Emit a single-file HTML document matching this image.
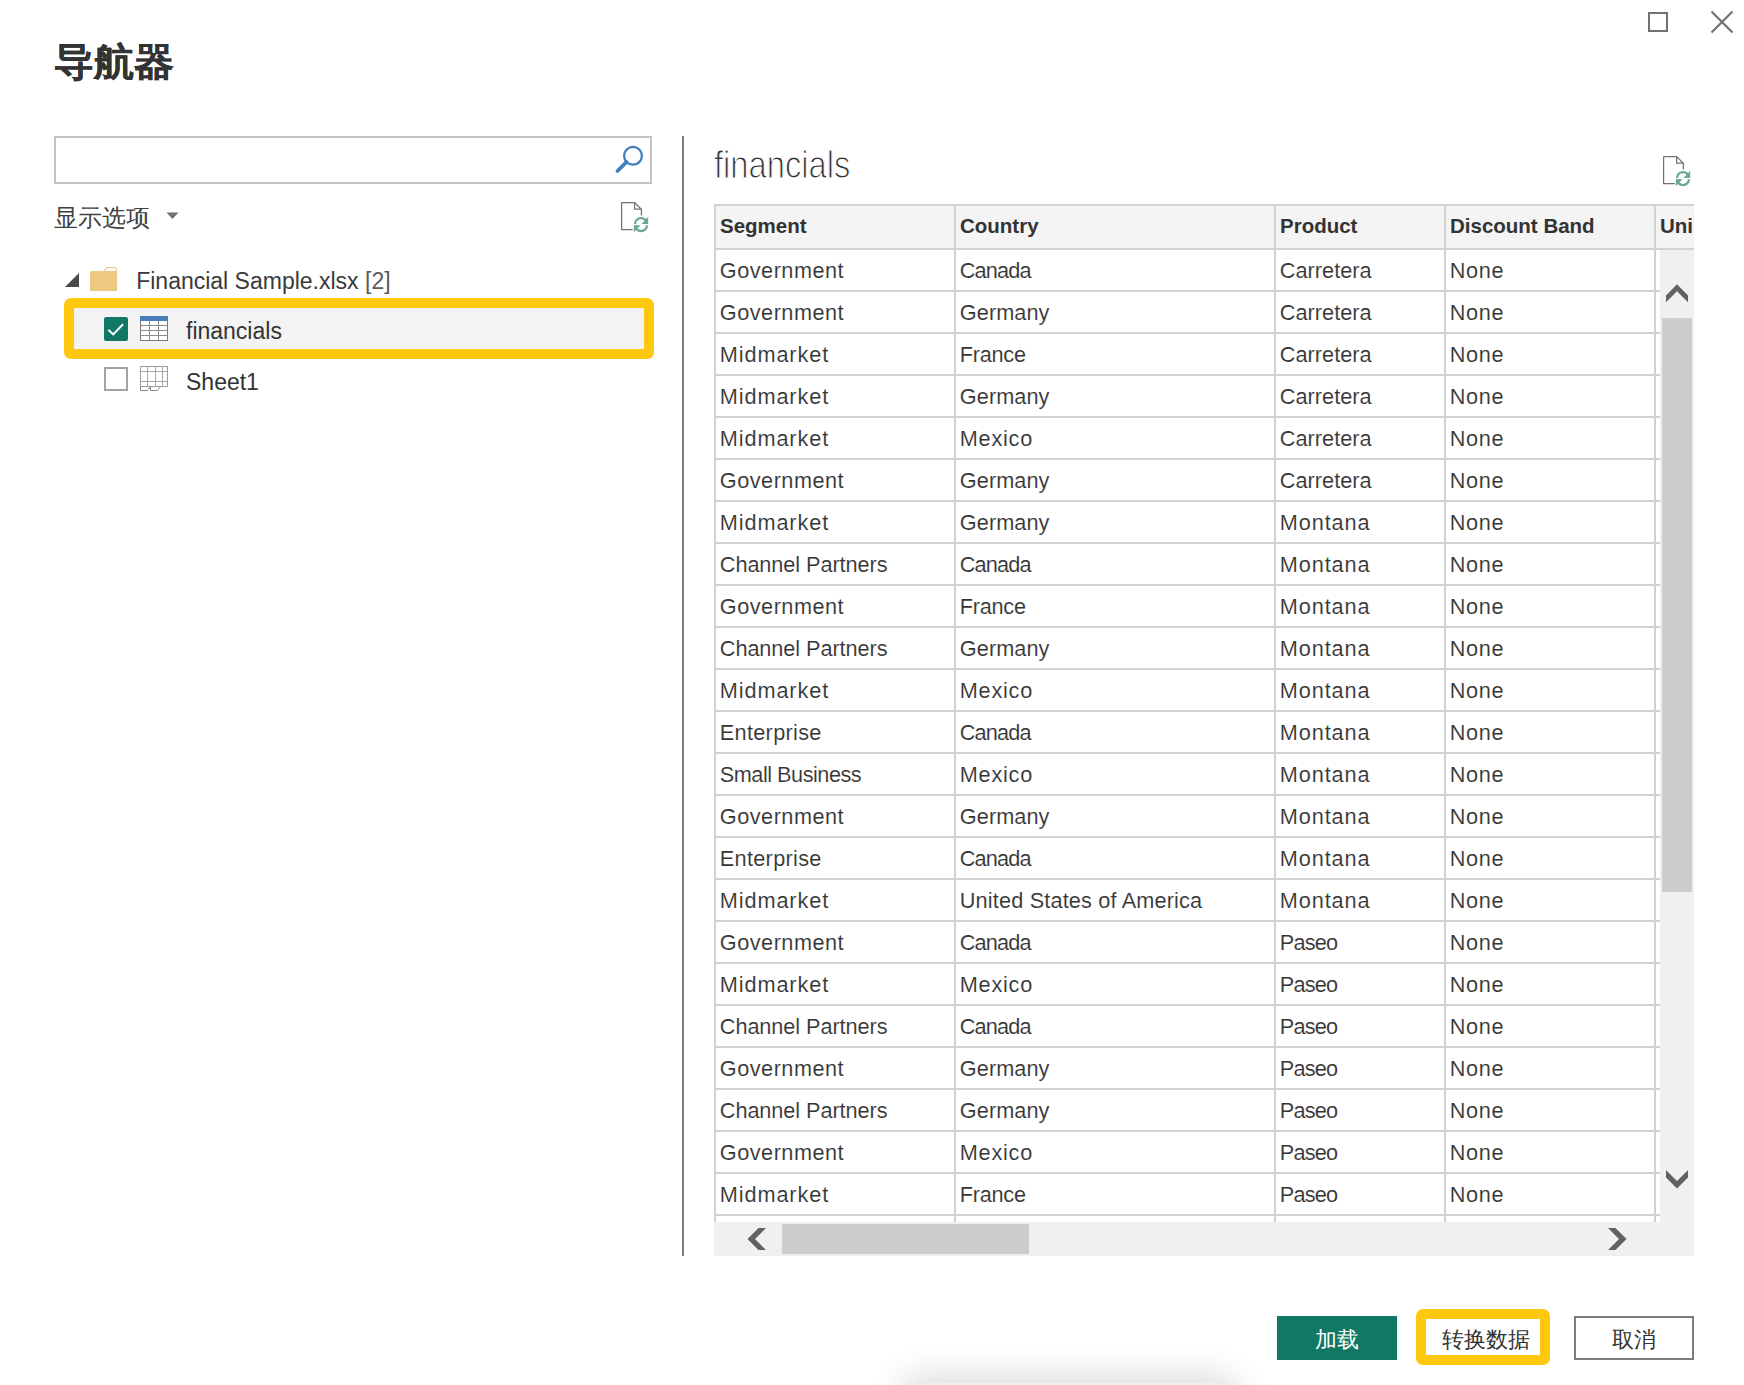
<!DOCTYPE html>
<html><head><meta charset="utf-8">
<style>
html,body{margin:0;padding:0;background:#fff;width:1744px;height:1385px;overflow:hidden;position:relative;font-family:"Liberation Sans",sans-serif;color:#333}
div,span,svg{position:absolute;box-sizing:border-box}
.ln{background:#d2d2d2}
.hdr{background:#f4f4f4}
.th{font-weight:bold;font-size:20.5px;line-height:24px;white-space:nowrap;color:#333}
.td{font-size:21.7px;line-height:24px;white-space:nowrap;color:#333;-webkit-text-stroke:0.12px #fff}
.clip{left:0;top:0;width:1694px;height:1222px;overflow:hidden}
.t{white-space:nowrap;line-height:1}
</style></head><body>
<!-- title -->
<div class="t" id="title" style="left:54px;top:42.7px;font-size:40px;font-weight:bold;color:#333;-webkit-text-stroke:0.35px #333;transform:scaleY(0.95);transform-origin:0 0">导航器</div>
<!-- window controls -->
<svg style="left:0;top:0" width="1744" height="60">
<rect x="1649" y="13" width="18" height="18" fill="none" stroke="#717171" stroke-width="2"/>
<path d="M1711.5 11.5L1732.5 32.5M1732.5 11.5L1711.5 32.5" stroke="#717171" stroke-width="2.2" fill="none"/>
</svg>
<!-- search -->
<div style="left:54px;top:136px;width:598px;height:48px;border:2px solid #c4c4c4"></div>
<svg style="left:0;top:0" width="700" height="400">
<circle cx="633" cy="155.8" r="8.9" fill="none" stroke="#3f7cc0" stroke-width="2.3"/>
<path d="M617.5 171L626.5 162" stroke="#3f7cc0" stroke-width="3.8" stroke-linecap="round"/>
<!-- show options triangle -->
<path d="M166.5 212.5H178.5L172.5 219Z" fill="#707070"/>
<!-- tree triangle -->
<path d="M65 287H79V273Z" fill="#4b4b4b"/>
<!-- folder -->
<path d="M90 273Q90 271 92 271H117V291H90Z" fill="#edc880"/>
<path d="M103.6 271L107.4 267.5H115Q116.5 267.5 116.5 269V271" fill="none" stroke="#edc77f" stroke-width="1.2"/>
<!-- checkbox unchecked -->
<rect x="105" y="368" width="22" height="22" fill="#fff" stroke="#a3a3a3" stroke-width="2"/>
<!-- sheet icon -->
<path d="M140.5 366.5H167.5V386.5H140.5Z" fill="#fff" stroke="#9a9a9a" stroke-width="1"/>
<path d="M140.5 371.5H167.5M140.5 381.5H167.5M147.5 366.5V386.5M155.5 366.5V386.5M162.5 366.5V386.5" stroke="#a8a8a8" stroke-width="1"/>
<path d="M140.5 386.5V390.5H147.5L150.5 386.5M150.5 386.5V390.5H157.5L160.5 386.5" fill="none" stroke="#8a8a8a" stroke-width="1"/>
</svg>
<!-- show options text -->
<div class="t" id="opts" style="left:54px;top:206px;font-size:24px;color:#404040">显示选项</div>
<!-- doc refresh icons -->
<svg style="left:620px;top:200px" width="32" height="34" viewBox="0 0 32 34">
<g id="docico">
<path d="M1.6 2.5H14.6L21.4 9.2V15.6M12.6 29.5H1.6V2.5M14.6 2.5V9.2H21.4" fill="none" stroke="#717171" stroke-width="1.25" stroke-linejoin="miter"/>
<path d="M13.9 24A7.1 7.1 0 0 1 28.1 24H25.8A4.8 4.8 0 0 0 16.2 24Z" fill="#6ba793"/>
<path d="M21.5 24H28.2V16.8Z" fill="#6ba793"/>
<path d="M13.9 25.2A7.1 7.1 0 0 0 28.1 25.2H25.8A4.8 4.8 0 0 1 16.2 25.2Z" fill="#6ba793"/>
<path d="M13.8 25.2H20.5L13.8 32.3Z" fill="#6ba793"/>
</g>
</svg>
<svg style="left:1661.9px;top:154px" width="32" height="34" viewBox="0 0 32 34">
<use href="#docico"/>
</svg>
<!-- divider -->
<div style="left:682px;top:136px;width:2px;height:1120px;background:#808080"></div>
<!-- tree labels -->
<div class="t" id="fs" style="left:136.2px;top:270.3px;font-size:23px;color:#3a3a3a">Financial Sample.xlsx <span style="position:static;color:#5a5a5a">[2]</span></div>
<!-- highlight -->
<div style="left:74px;top:308px;width:570px;height:41px;background:#f3f3f3"></div>
<div style="left:64px;top:298px;width:590px;height:61px;border:10px solid #fec80f;border-radius:7px"></div>
<svg style="left:0;top:0" width="700" height="400">
<rect x="104" y="317" width="24" height="24" rx="2" fill="#117865"/>
<path d="M108.3 329.8L113.2 334.4L123 324.3" fill="none" stroke="#fff" stroke-width="2"/>
<rect x="140.5" y="320.5" width="27" height="20" fill="#fff" stroke="#7a7a7a" stroke-width="1"/>
<rect x="140" y="316" width="28" height="5" fill="#4a7ebb"/>
<path d="M140.5 325.5H167.5M140.5 330.5H167.5M140.5 335.5H167.5M149.5 321V340M158.5 321V340" stroke="#8a8a8a" stroke-width="1"/>
</svg>
<div class="t" id="fin" style="left:186px;top:320.3px;font-size:23px;color:#333">financials</div>
<div class="t" id="sh" style="left:186px;top:370.6px;font-size:23px;color:#333">Sheet1</div>
<!-- right title -->
<div class="t" id="rtitle" style="left:714px;top:145.9px;font-size:38.5px;color:#333;-webkit-text-stroke:1.1px #fff;paint-order:normal;transform:scaleX(0.85);transform-origin:0 0">financials</div>
<!-- table -->
<div class="clip">
<div class="hdr" style="left:714px;top:206px;width:980px;height:42px"></div>
<div class="ln" style="left:714px;top:204px;width:980px;height:2px"></div>
<div class="ln" style="left:714px;top:248px;width:980px;height:2px"></div>
<div class="ln" style="left:714px;top:290px;width:946px;height:2px"></div>
<div class="ln" style="left:714px;top:332px;width:946px;height:2px"></div>
<div class="ln" style="left:714px;top:374px;width:946px;height:2px"></div>
<div class="ln" style="left:714px;top:416px;width:946px;height:2px"></div>
<div class="ln" style="left:714px;top:458px;width:946px;height:2px"></div>
<div class="ln" style="left:714px;top:500px;width:946px;height:2px"></div>
<div class="ln" style="left:714px;top:542px;width:946px;height:2px"></div>
<div class="ln" style="left:714px;top:584px;width:946px;height:2px"></div>
<div class="ln" style="left:714px;top:626px;width:946px;height:2px"></div>
<div class="ln" style="left:714px;top:668px;width:946px;height:2px"></div>
<div class="ln" style="left:714px;top:710px;width:946px;height:2px"></div>
<div class="ln" style="left:714px;top:752px;width:946px;height:2px"></div>
<div class="ln" style="left:714px;top:794px;width:946px;height:2px"></div>
<div class="ln" style="left:714px;top:836px;width:946px;height:2px"></div>
<div class="ln" style="left:714px;top:878px;width:946px;height:2px"></div>
<div class="ln" style="left:714px;top:920px;width:946px;height:2px"></div>
<div class="ln" style="left:714px;top:962px;width:946px;height:2px"></div>
<div class="ln" style="left:714px;top:1004px;width:946px;height:2px"></div>
<div class="ln" style="left:714px;top:1046px;width:946px;height:2px"></div>
<div class="ln" style="left:714px;top:1088px;width:946px;height:2px"></div>
<div class="ln" style="left:714px;top:1130px;width:946px;height:2px"></div>
<div class="ln" style="left:714px;top:1172px;width:946px;height:2px"></div>
<div class="ln" style="left:714px;top:1214px;width:946px;height:2px"></div>
<div class="ln" style="left:714px;top:204px;width:2px;height:1018px"></div>
<div class="ln" style="left:954px;top:204px;width:2px;height:1018px"></div>
<div class="ln" style="left:1274px;top:204px;width:2px;height:1018px"></div>
<div class="ln" style="left:1444px;top:204px;width:2px;height:1018px"></div>
<div class="ln" style="left:1654px;top:204px;width:2px;height:1018px"></div>
<div class="th" style="left:720px;top:214.3px">Segment</div>
<div class="th" style="left:960px;top:214.3px">Country</div>
<div class="th" style="left:1280px;top:214.3px">Product</div>
<div class="th" style="left:1450px;top:214.3px">Discount Band</div>
<div class="th" style="left:1660px;top:214.3px">Uni</div>
<div class="td" style="left:719.8px;top:258.5px;letter-spacing:0.5px">Government</div>
<div class="td" style="left:959.8px;top:258.5px;letter-spacing:-0.84px">Canada</div>
<div class="td" style="left:1279.8px;top:258.5px;letter-spacing:0.03px">Carretera</div>
<div class="td" style="left:1449.8px;top:258.5px;letter-spacing:0.63px">None</div>
<div class="td" style="left:719.8px;top:300.5px;letter-spacing:0.5px">Government</div>
<div class="td" style="left:959.8px;top:300.5px;letter-spacing:0.08px">Germany</div>
<div class="td" style="left:1279.8px;top:300.5px;letter-spacing:0.03px">Carretera</div>
<div class="td" style="left:1449.8px;top:300.5px;letter-spacing:0.63px">None</div>
<div class="td" style="left:719.8px;top:342.5px;letter-spacing:0.9px">Midmarket</div>
<div class="td" style="left:959.8px;top:342.5px;letter-spacing:-0.26px">France</div>
<div class="td" style="left:1279.8px;top:342.5px;letter-spacing:0.03px">Carretera</div>
<div class="td" style="left:1449.8px;top:342.5px;letter-spacing:0.63px">None</div>
<div class="td" style="left:719.8px;top:384.5px;letter-spacing:0.9px">Midmarket</div>
<div class="td" style="left:959.8px;top:384.5px;letter-spacing:0.08px">Germany</div>
<div class="td" style="left:1279.8px;top:384.5px;letter-spacing:0.03px">Carretera</div>
<div class="td" style="left:1449.8px;top:384.5px;letter-spacing:0.63px">None</div>
<div class="td" style="left:719.8px;top:426.5px;letter-spacing:0.9px">Midmarket</div>
<div class="td" style="left:959.8px;top:426.5px;letter-spacing:0.74px">Mexico</div>
<div class="td" style="left:1279.8px;top:426.5px;letter-spacing:0.03px">Carretera</div>
<div class="td" style="left:1449.8px;top:426.5px;letter-spacing:0.63px">None</div>
<div class="td" style="left:719.8px;top:468.5px;letter-spacing:0.5px">Government</div>
<div class="td" style="left:959.8px;top:468.5px;letter-spacing:0.08px">Germany</div>
<div class="td" style="left:1279.8px;top:468.5px;letter-spacing:0.03px">Carretera</div>
<div class="td" style="left:1449.8px;top:468.5px;letter-spacing:0.63px">None</div>
<div class="td" style="left:719.8px;top:510.5px;letter-spacing:0.9px">Midmarket</div>
<div class="td" style="left:959.8px;top:510.5px;letter-spacing:0.08px">Germany</div>
<div class="td" style="left:1279.8px;top:510.5px;letter-spacing:0.9px">Montana</div>
<div class="td" style="left:1449.8px;top:510.5px;letter-spacing:0.63px">None</div>
<div class="td" style="left:719.8px;top:552.5px;letter-spacing:-0.07px">Channel Partners</div>
<div class="td" style="left:959.8px;top:552.5px;letter-spacing:-0.84px">Canada</div>
<div class="td" style="left:1279.8px;top:552.5px;letter-spacing:0.9px">Montana</div>
<div class="td" style="left:1449.8px;top:552.5px;letter-spacing:0.63px">None</div>
<div class="td" style="left:719.8px;top:594.5px;letter-spacing:0.5px">Government</div>
<div class="td" style="left:959.8px;top:594.5px;letter-spacing:-0.26px">France</div>
<div class="td" style="left:1279.8px;top:594.5px;letter-spacing:0.9px">Montana</div>
<div class="td" style="left:1449.8px;top:594.5px;letter-spacing:0.63px">None</div>
<div class="td" style="left:719.8px;top:636.5px;letter-spacing:-0.07px">Channel Partners</div>
<div class="td" style="left:959.8px;top:636.5px;letter-spacing:0.08px">Germany</div>
<div class="td" style="left:1279.8px;top:636.5px;letter-spacing:0.9px">Montana</div>
<div class="td" style="left:1449.8px;top:636.5px;letter-spacing:0.63px">None</div>
<div class="td" style="left:719.8px;top:678.5px;letter-spacing:0.9px">Midmarket</div>
<div class="td" style="left:959.8px;top:678.5px;letter-spacing:0.74px">Mexico</div>
<div class="td" style="left:1279.8px;top:678.5px;letter-spacing:0.9px">Montana</div>
<div class="td" style="left:1449.8px;top:678.5px;letter-spacing:0.63px">None</div>
<div class="td" style="left:719.8px;top:720.5px;letter-spacing:0.3px">Enterprise</div>
<div class="td" style="left:959.8px;top:720.5px;letter-spacing:-0.84px">Canada</div>
<div class="td" style="left:1279.8px;top:720.5px;letter-spacing:0.9px">Montana</div>
<div class="td" style="left:1449.8px;top:720.5px;letter-spacing:0.63px">None</div>
<div class="td" style="left:719.8px;top:762.5px;letter-spacing:-0.49px">Small Business</div>
<div class="td" style="left:959.8px;top:762.5px;letter-spacing:0.74px">Mexico</div>
<div class="td" style="left:1279.8px;top:762.5px;letter-spacing:0.9px">Montana</div>
<div class="td" style="left:1449.8px;top:762.5px;letter-spacing:0.63px">None</div>
<div class="td" style="left:719.8px;top:804.5px;letter-spacing:0.5px">Government</div>
<div class="td" style="left:959.8px;top:804.5px;letter-spacing:0.08px">Germany</div>
<div class="td" style="left:1279.8px;top:804.5px;letter-spacing:0.9px">Montana</div>
<div class="td" style="left:1449.8px;top:804.5px;letter-spacing:0.63px">None</div>
<div class="td" style="left:719.8px;top:846.5px;letter-spacing:0.3px">Enterprise</div>
<div class="td" style="left:959.8px;top:846.5px;letter-spacing:-0.84px">Canada</div>
<div class="td" style="left:1279.8px;top:846.5px;letter-spacing:0.9px">Montana</div>
<div class="td" style="left:1449.8px;top:846.5px;letter-spacing:0.63px">None</div>
<div class="td" style="left:719.8px;top:888.5px;letter-spacing:0.9px">Midmarket</div>
<div class="td" style="left:959.8px;top:888.5px;letter-spacing:0.16px">United States of America</div>
<div class="td" style="left:1279.8px;top:888.5px;letter-spacing:0.9px">Montana</div>
<div class="td" style="left:1449.8px;top:888.5px;letter-spacing:0.63px">None</div>
<div class="td" style="left:719.8px;top:930.5px;letter-spacing:0.5px">Government</div>
<div class="td" style="left:959.8px;top:930.5px;letter-spacing:-0.84px">Canada</div>
<div class="td" style="left:1279.8px;top:930.5px;letter-spacing:-0.8px">Paseo</div>
<div class="td" style="left:1449.8px;top:930.5px;letter-spacing:0.63px">None</div>
<div class="td" style="left:719.8px;top:972.5px;letter-spacing:0.9px">Midmarket</div>
<div class="td" style="left:959.8px;top:972.5px;letter-spacing:0.74px">Mexico</div>
<div class="td" style="left:1279.8px;top:972.5px;letter-spacing:-0.8px">Paseo</div>
<div class="td" style="left:1449.8px;top:972.5px;letter-spacing:0.63px">None</div>
<div class="td" style="left:719.8px;top:1014.5px;letter-spacing:-0.07px">Channel Partners</div>
<div class="td" style="left:959.8px;top:1014.5px;letter-spacing:-0.84px">Canada</div>
<div class="td" style="left:1279.8px;top:1014.5px;letter-spacing:-0.8px">Paseo</div>
<div class="td" style="left:1449.8px;top:1014.5px;letter-spacing:0.63px">None</div>
<div class="td" style="left:719.8px;top:1056.5px;letter-spacing:0.5px">Government</div>
<div class="td" style="left:959.8px;top:1056.5px;letter-spacing:0.08px">Germany</div>
<div class="td" style="left:1279.8px;top:1056.5px;letter-spacing:-0.8px">Paseo</div>
<div class="td" style="left:1449.8px;top:1056.5px;letter-spacing:0.63px">None</div>
<div class="td" style="left:719.8px;top:1098.5px;letter-spacing:-0.07px">Channel Partners</div>
<div class="td" style="left:959.8px;top:1098.5px;letter-spacing:0.08px">Germany</div>
<div class="td" style="left:1279.8px;top:1098.5px;letter-spacing:-0.8px">Paseo</div>
<div class="td" style="left:1449.8px;top:1098.5px;letter-spacing:0.63px">None</div>
<div class="td" style="left:719.8px;top:1140.5px;letter-spacing:0.5px">Government</div>
<div class="td" style="left:959.8px;top:1140.5px;letter-spacing:0.74px">Mexico</div>
<div class="td" style="left:1279.8px;top:1140.5px;letter-spacing:-0.8px">Paseo</div>
<div class="td" style="left:1449.8px;top:1140.5px;letter-spacing:0.63px">None</div>
<div class="td" style="left:719.8px;top:1182.5px;letter-spacing:0.9px">Midmarket</div>
<div class="td" style="left:959.8px;top:1182.5px;letter-spacing:-0.26px">France</div>
<div class="td" style="left:1279.8px;top:1182.5px;letter-spacing:-0.8px">Paseo</div>
<div class="td" style="left:1449.8px;top:1182.5px;letter-spacing:0.63px">None</div>
</div>
<!-- vertical scrollbar -->
<div style="left:1660px;top:250px;width:34px;height:1006px;background:#f0f0f0"></div>
<div style="left:1662px;top:318px;width:30px;height:574px;background:#cdcdcd"></div>
<!-- horizontal scrollbar -->
<div style="left:714px;top:1222px;width:980px;height:34px;background:#f0f0f0"></div>
<div style="left:782px;top:1224px;width:247px;height:30px;background:#cdcdcd"></div>
<svg style="left:0;top:0" width="1744" height="1300">
<path d="M1666 295.5L1677 284.3L1688 295.5V302.2L1677 291.2L1666 302.2Z" fill="#626262"/>
<path d="M1666 1170L1677 1181L1688 1170V1177.6L1677 1188.5L1666 1177.6Z" fill="#626262"/>
<path d="M758.5 1228H766L755 1239L766 1250H758.5L747.5 1239Z" fill="#626262"/>
<path d="M1608 1228H1615.5L1626.5 1239L1615.5 1250H1608L1619 1239Z" fill="#626262"/>
</svg>
<!-- shadow -->
<div style="left:905px;top:1383px;width:330px;height:40px;border-radius:20px;box-shadow:0 -2px 34px 6px rgba(0,0,0,0.14);background:#efefef"></div>
<!-- buttons -->
<div style="left:1277px;top:1316px;width:120px;height:44px;background:#117865"></div>
<div class="t" id="b1" style="left:1315px;top:1328.5px;font-size:22px;color:#fff">加载</div>
<div style="left:1416px;top:1309px;width:134px;height:56px;border:10px solid #fec80f;border-radius:7px;background:#fff"></div>
<div class="t" id="b2" style="left:1442px;top:1328.5px;font-size:22px;color:#333">转换数据</div>
<div style="left:1574px;top:1316px;width:120px;height:44px;border:2px solid #7a7a7a;background:#fff"></div>
<div class="t" id="b3" style="left:1612px;top:1328.5px;font-size:22px;color:#333">取消</div>
</body></html>
